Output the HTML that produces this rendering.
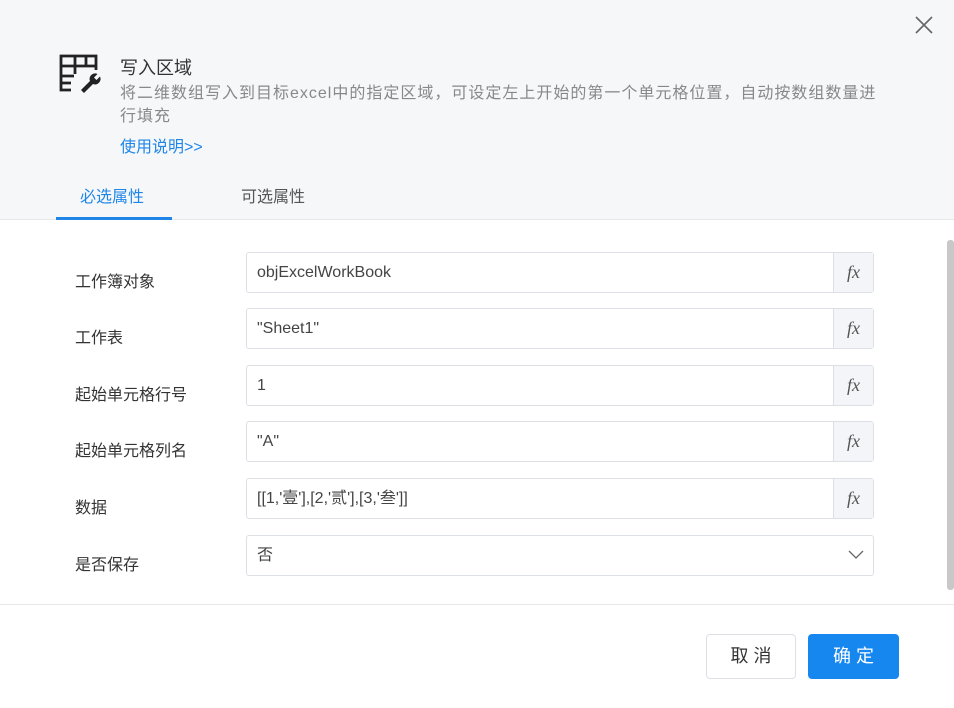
<!DOCTYPE html>
<html><head><meta charset="utf-8"><style>
*{box-sizing:border-box;margin:0;padding:0}
body{width:954px;height:708px;overflow:hidden;background:#fff;font-family:"Liberation Sans","Noto Sans CJK SC",sans-serif;position:relative;color:#333}
.hdr{position:absolute;left:0;top:0;width:954px;height:220px;background:#f6f7f9;border-bottom:1px solid #e8e8e8}
.t{position:absolute;font-size:14px;white-space:nowrap}
.lbl{position:absolute;left:75px;font-size:16px;color:#333}
.inp{position:absolute;left:246px;width:628px;height:41px;border:1px solid #dcdfe4;border-radius:3px;background:#fff;font-size:16px;color:#444;padding:0 10px;line-height:39px}
.fx{position:absolute;right:0;top:0;width:40px;height:39px;border-left:1px solid #dcdfe4;background:#f3f5f8;font-family:"Liberation Serif",serif;font-style:italic;font-size:18px;color:#555;text-align:center;line-height:38px}
.btn{position:absolute;top:634px;height:45px;border-radius:4px;font-size:18px;text-align:center;line-height:45px;letter-spacing:5px;text-indent:5px}
</style></head><body>
<div class="hdr"></div>
<svg style="position:absolute;left:913px;top:14px" width="22" height="22" viewBox="0 0 22 22"><path d="M3 3L19 19M19 3L3 19" stroke="#666" stroke-width="1.6"/></svg>
<svg style="position:absolute;left:57px;top:52px" width="46" height="42" viewBox="0 0 46 42"><g fill="none" stroke="#222" stroke-width="2.8"><path d="M14 38H4V4H39V18"/><path d="M4 14H39M4 24H17M4 31H14M18 4V22M29 4V14"/></g><path d="M24 38l9-9a5.5 5.5 0 0 1 7.5-7l-3.5 3.5 2.5 2.5 3.5-3.5a5.5 5.5 0 0 1-7 7.5l-9 9z" fill="#222"/></svg>
<div class="t" style="left:120px;top:54px;font-size:18px;color:#333">写入区域</div>
<div class="t" style="left:120px;top:79px;color:#888;font-size:16px;letter-spacing:1px">将二维数组写入到目标excel中的指定区域，可设定左上开始的第一个单元格位置，自动按数组数量进</div>
<div class="t" style="left:120px;top:102px;color:#888;font-size:16px;letter-spacing:1px">行填充</div>
<div class="t" style="left:120px;top:133px;color:#1f86e8;font-size:16px">使用说明&gt;&gt;</div>
<div class="t" style="left:80px;top:183px;color:#1f86e8;font-size:16px">必选属性</div>
<div class="t" style="left:241px;top:183px;color:#555;font-size:16px">可选属性</div>
<div style="position:absolute;left:56px;top:217px;width:116px;height:3px;background:#1f86e8"></div>

<div class="lbl" style="top:268px">工作簿对象</div>
<div class="inp" style="top:252px">objExcelWorkBook<div class="fx">fx</div></div>
<div class="lbl" style="top:324px">工作表</div>
<div class="inp" style="top:308px">"Sheet1"<div class="fx">fx</div></div>
<div class="lbl" style="top:381px">起始单元格行号</div>
<div class="inp" style="top:365px">1<div class="fx">fx</div></div>
<div class="lbl" style="top:437px">起始单元格列名</div>
<div class="inp" style="top:421px">"A"<div class="fx">fx</div></div>
<div class="lbl" style="top:494px">数据</div>
<div class="inp" style="top:478px">[[1,'壹'],[2,'贰'],[3,'叁']]<div class="fx">fx</div></div>
<div class="lbl" style="top:551px">是否保存</div>
<div class="inp" style="top:535px">否<svg style="position:absolute;right:9px;top:13px" width="16" height="12" viewBox="0 0 16 12"><path d="M1 2l7 7 7-7" fill="none" stroke="#666" stroke-width="1.3"/></svg></div>

<div style="position:absolute;left:947px;top:240px;width:7px;height:350px;background:#c8c8c8;border-radius:3px"></div>
<div style="position:absolute;left:0;top:604px;width:954px;height:1px;background:#e8e8e8"></div>
<div class="btn" style="left:706px;width:90px;border:1px solid #dcdfe4;background:#fff;color:#333;line-height:43px">取消</div>
<div class="btn" style="left:808px;width:91px;background:#1787f0;color:#fff">确定</div>
</body></html>
